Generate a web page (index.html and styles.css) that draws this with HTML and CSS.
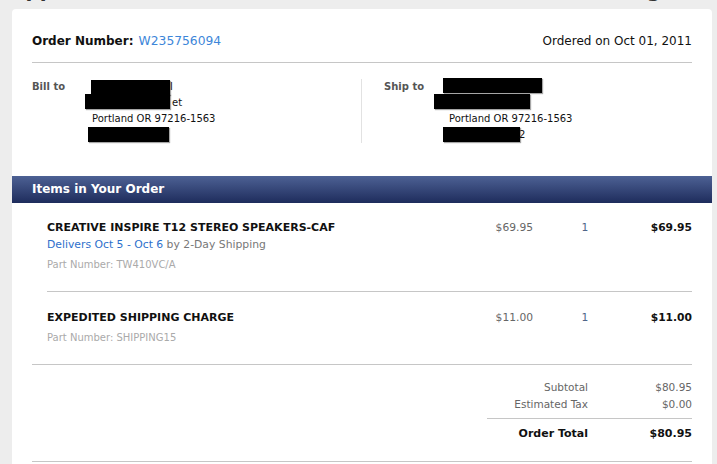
FILE: index.html
```html
<!DOCTYPE html>
<html>
<head>
<meta charset="utf-8">
<title>Order W235756094</title>
<link rel="stylesheet" href="styles.css">
</head>
<body>
<div class="page-title"><span class="title-left">Apple Store Order</span><span class="title-right">Order Tracking</span></div>
<div class="card">
  <div class="order-head">
    <div class="order-num"><b>Order Number:</b> <span class="order-link">W235756094</span></div>
    <div class="order-date">Ordered on Oct 01, 2011</div>
  </div>
  <div class="addresses">
    <div class="addr addr-bill">
      <div class="addr-label">Bill to</div>
      <div class="addr-lines">
        <div><span class="redact rb1"></span>l</div>
        <div><span class="redact rb2"></span>et</div>
        <div>Portland OR 97216-1563</div>
        <div><span class="redact rb4"></span></div>
      </div>
    </div>
    <div class="addr addr-ship">
      <div class="addr-label">Ship to</div>
      <div class="addr-lines">
        <div><span class="redact rs1"></span></div>
        <div><span class="redact rs2"></span></div>
        <div>Portland OR 97216-1563</div>
        <div><span class="redact rs4"></span><span class="tail">2</span></div>
      </div>
    </div>
  </div>
  <div class="items-bar">Items in Your Order</div>
  <div class="item item-first">
    <div class="item-desc">
      <div class="item-name">CREATIVE INSPIRE T12 STEREO SPEAKERS-CAF</div>
      <div class="item-ship"><span class="ship-date">Delivers Oct 5 - Oct 6</span> by 2-Day Shipping</div>
      <div class="item-part">Part Number: TW410VC/A</div>
    </div>
    <div class="item-price">$69.95</div>
    <div class="item-qty">1</div>
    <div class="item-total">$69.95</div>
  </div>
  <div class="item item-last">
    <div class="item-desc">
      <div class="item-name">EXPEDITED SHIPPING CHARGE</div>
      <div class="item-part">Part Number: SHIPPING15</div>
    </div>
    <div class="item-price">$11.00</div>
    <div class="item-qty">1</div>
    <div class="item-total">$11.00</div>
  </div>
  <div class="totals-wrap">
    <div class="totals">
      <div class="t-label">Subtotal</div><div class="t-value">$80.95</div>
      <div class="t-label">Estimated Tax</div><div class="t-value">$0.00</div>
      <div class="t-label t-grand t-sep">Order Total</div><div class="t-value t-grand t-sep">$80.95</div>
    </div>
  </div>
  <div class="card-foot"></div>
</div>
</body>
</html>
```
FILE: styles.css
```css
html, body {
  margin: 0;
  padding: 0;
  background: #ededed;
  font-family: "DejaVu Sans", Verdana, sans-serif;
  color: #111;
}

.page-title {
  height: 9px;
  overflow: hidden;
  display: flex;
  justify-content: space-between;
  padding: 0 56px 0 10px;
  font-size: 20px;
  line-height: 20px;
  font-weight: bold;
  color: #333;
}
.page-title span {
  display: block;
  margin-top: -20px;
}

.card {
  margin: 0 5px 0 12px;
  background: #fff;
  border-radius: 4px 4px 0 0;
}

.order-head {
  margin: 0 20px;
  padding: 22px 0 12px;
  border-bottom: 1px solid #c6c6c6;
  display: flex;
  justify-content: space-between;
  align-items: center;
  line-height: 18px;
}
.order-num b {
  font-size: 12px;
  font-weight: bold;
}
.order-link {
  font-size: 12.3px;
  color: #3d86d9;
}
.order-date {
  font-size: 12px;
}

.addresses {
  margin: 0 20px;
  padding: 16px 0 33px;
  display: grid;
  grid-template-columns: 329px 1fr;
  font-size: 10px;
  line-height: 16px;
}
.addr {
  display: grid;
}
.addr-bill {
  grid-template-columns: 60px 1fr;
}
.addr-ship {
  grid-template-columns: 65px 1fr;
  padding-left: 22px;
  border-left: 1px solid #e2e2e2;
}
.addr-label {
  font-weight: bold;
  color: #555;
}
.redact {
  display: inline-block;
  height: 15px;
  vertical-align: top;
  background: #000;
  box-shadow: 1px 1px 1px rgba(0, 0, 0, 0.35);
}
.rb1 { width: 79px; margin-left: -1px; margin-top: 1px; }
.rb2 { width: 85px; margin-left: -7px; margin-top: -1px; margin-right: 2px; }
.rb4 { width: 81px; margin-left: -4px; }
.rs1 { width: 99px; margin-left: -6px; margin-top: -1px; }
.rs2 { width: 96px; margin-left: -15px; margin-top: -1px; }
.rs4 { width: 77px; margin-left: -6px; }
.tail { margin-left: -1px; }

.items-bar {
  height: 27px;
  line-height: 27px;
  padding-left: 20px;
  background: linear-gradient(#4d6194, #1e2c5c);
  color: #fff;
  font-size: 12px;
  font-weight: bold;
}

.item {
  display: grid;
  grid-template-columns: 390px 96px 104px 1fr;
  margin: 0 20px 0 35px;
  padding: 17px 0 18px;
  border-bottom: 1px solid #c6c6c6;
  line-height: 16px;
}
.item-last {
  margin-left: 20px;
  padding-left: 15px;
  padding-top: 18px;
}
.item-name {
  font-size: 11px;
  font-weight: bold;
  color: #111;
}
.item-ship {
  font-size: 10.8px;
  line-height: 17px;
  color: #777;
}
.ship-date {
  color: #2d6fcc;
}
.item-part {
  margin-top: 4px;
  font-size: 10px;
  color: #aaa;
}
.item-price {
  text-align: right;
  font-size: 10.7px;
  color: #666;
}
.item-qty {
  text-align: center;
  font-size: 10.7px;
  color: #4f6588;
}
.item-total {
  text-align: right;
  font-size: 10.7px;
  font-weight: bold;
}

.totals-wrap {
  margin: 0 20px;
  padding: 14px 0 19px;
  display: flex;
  justify-content: flex-end;
  border-bottom: 1px solid #c6c6c6;
}
.totals {
  width: 205px;
  display: grid;
  grid-template-columns: 101px 104px;
  font-size: 10.5px;
  line-height: 17px;
  color: #666;
}
.t-label, .t-value {
  text-align: right;
}
.t-sep {
  margin-top: 5px;
  padding-top: 7px;
  border-top: 1px solid #c6c6c6;
  line-height: 16px;
}
.t-grand {
  font-weight: bold;
  color: #111;
  font-size: 11px;
}

.card-foot {
  height: 20px;
}
```
